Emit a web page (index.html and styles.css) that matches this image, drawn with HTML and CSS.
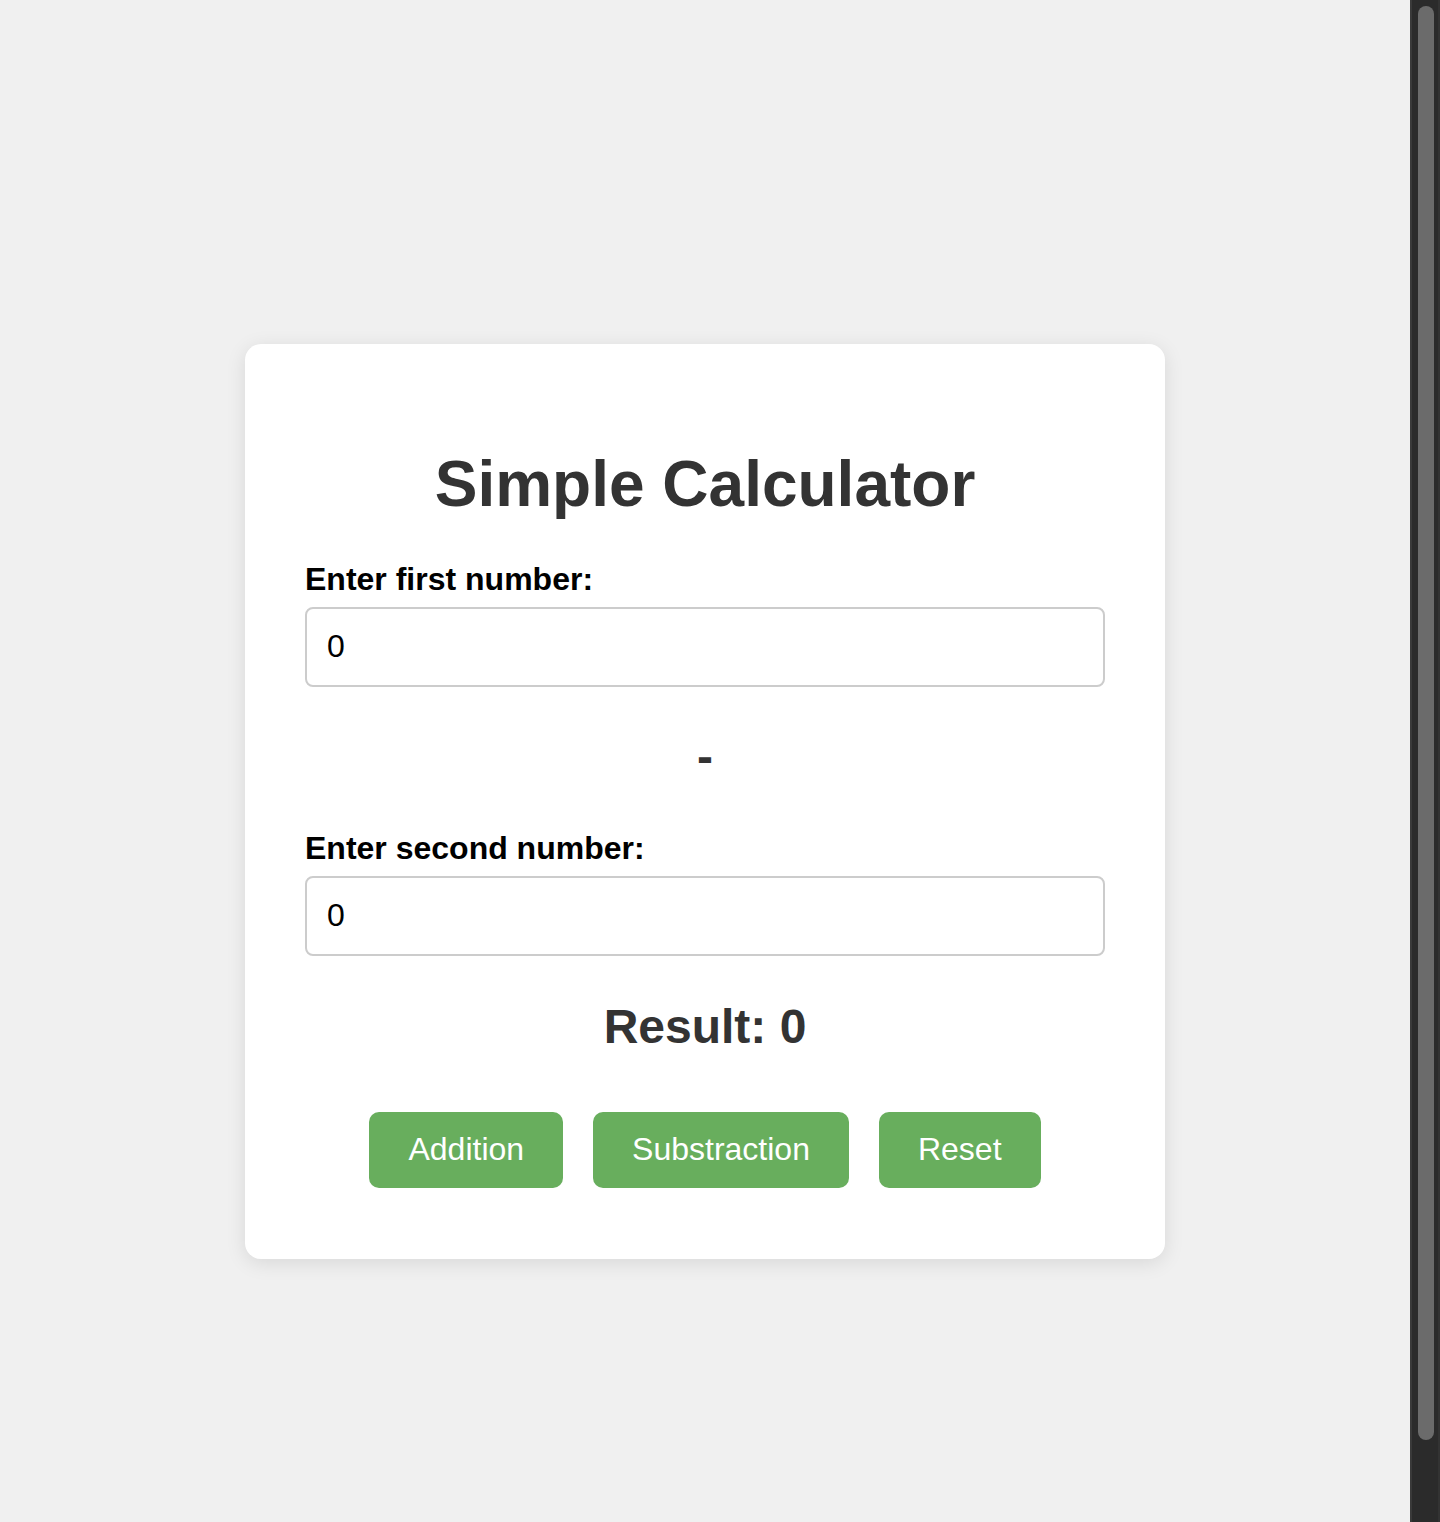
FILE: index.html
```html
<!DOCTYPE html>
<html lang="en">
<head>
<meta charset="utf-8">
<title>Simple Calculator</title>
<link rel="stylesheet" href="styles.css">
</head>
<body>
<div class="viewport">
  <div class="page">
    <div class="calculator">
      <h1 class="title">Simple Calculator</h1>
      <label class="field-label" for="num1">Enter first number:</label>
      <input class="field-input" id="num1" type="number" value="0">
      <h2 class="operator">-</h2>
      <label class="field-label" for="num2">Enter second number:</label>
      <input class="field-input" id="num2" type="number" value="0">
      <h2 class="result">Result: 0</h2>
      <div class="buttons">
        <button class="btn">Addition</button>
        <button class="btn">Substraction</button>
        <button class="btn">Reset</button>
      </div>
    </div>
  </div>
</div>
<div class="scrollbar"><div class="scroll-thumb"></div></div>
</body>
</html>
```

FILE: styles.css
```css
html, body {
  margin: 0;
  padding: 0;
  height: 1522px;
  overflow: hidden;
}

body {
  display: flex;
  background: #f0f0f0;
  font-family: "Liberation Sans", Arial, Helvetica, sans-serif;
}

.viewport {
  flex: 1;
  height: 1522px;
  overflow: hidden;
}

.page {
  box-sizing: border-box;
  height: 1602px;
  padding: 40px 0;
  display: flex;
  align-items: center;
  justify-content: center;
}

.calculator {
  box-sizing: border-box;
  width: 920px;
  background: #ffffff;
  border-radius: 16px;
  padding: 60px 60px 71px;
  box-shadow: 0 4px 20px rgba(0, 0, 0, 0.1);
  display: flex;
  flex-direction: column;
}

.title {
  margin: 43px 0 40px;
  font-size: 64px;
  line-height: 74px;
  font-weight: bold;
  color: #333333;
  text-align: center;
}

.field-label {
  display: block;
  font-size: 32px;
  line-height: 37px;
  font-weight: bold;
  color: #000000;
  margin-bottom: 9px;
}

.field-input {
  box-sizing: border-box;
  width: 100%;
  height: 80px;
  margin: 0;
  padding: 0 20px;
  font-family: "Liberation Sans", Arial, Helvetica, sans-serif;
  font-size: 32px;
  color: #000000;
  background: #ffffff;
  border: 2px solid #cccccc;
  border-radius: 8px;
  outline: none;
  -moz-appearance: textfield;
}

.field-input::-webkit-outer-spin-button,
.field-input::-webkit-inner-spin-button {
  -webkit-appearance: none;
  margin: 0;
}

.operator,
.result {
  font-size: 48px;
  line-height: 55px;
  font-weight: bold;
  color: #333333;
  text-align: center;
}

.operator {
  margin: 42px 0 46px;
}

.result {
  margin: 43px 0 40px;
}

.buttons {
  display: flex;
  justify-content: center;
  gap: 30px;
  margin-top: 18px;
}

.btn {
  height: 76px;
  padding: 0 39px;
  font-family: "Liberation Sans", Arial, Helvetica, sans-serif;
  font-size: 32px;
  color: #ffffff;
  background: #68ae5d;
  border: none;
  border-radius: 10px;
  cursor: pointer;
}

.scrollbar {
  box-sizing: border-box;
  width: 30px;
  height: 1522px;
  background: #2b2b2b;
  border-left: 2px solid #3a3a3a;
  border-right: 2px solid #333333;
  padding: 6px 4px 0 6px;
}

.scroll-thumb {
  width: 16px;
  height: 1434px;
  background: #6b6b6b;
  border-radius: 8px;
}
```
